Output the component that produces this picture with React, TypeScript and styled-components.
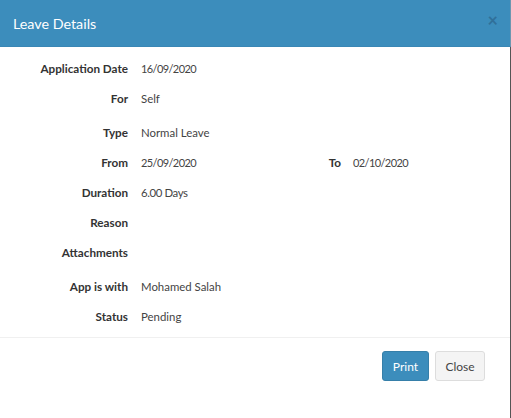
import React from "react";
import styled, { createGlobalStyle } from "styled-components";

const Global = createGlobalStyle`
  html, body { margin: 0; padding: 0; background: #fff; }
  body { font-family: "Lato", "Noto Sans", sans-serif; font-size: 11.7px; color: #333; }
`;

const Modal = styled.div`
  width: 511px;
  height: 418px;
  background: #fff;
  overflow: hidden;
`;

const Header = styled.header`
  height: 47px;
  box-sizing: border-box;
  background: #3c8dbc;
  border-bottom: 1px solid #3a87b5;
  border-right: 1px solid #6d97b0;
  color: #fff;
  display: flex;
  align-items: center;
  justify-content: space-between;
  padding: 0 12px 0 13px;
`;

const Title = styled.h4`
  margin: 0;
  font-size: 14.3px;
  font-weight: 400;
`;

const CloseX = styled.span`
  font-size: 18px;
  font-weight: 700;
  color: #30709a;
  line-height: 1;
  margin-top: -6px;
`;

const Content = styled.div`
  height: 371px;
  box-sizing: border-box;
  border-right: 1px solid #555;
`;

const Body = styled.div`
  padding: 6px 0 0;
  height: 291px;
  box-sizing: border-box;
  border-bottom: 1px solid #f0f0f0;
`;

const Row = styled.div<{ $top?: number }>`
  height: 30px;
  margin-top: ${(p) => p.$top ?? 0}px;
  display: flex;
  align-items: center;
`;

const Label = styled.span`
  width: 128px;
  text-align: right;
  font-weight: 700;
  color: #333;
  flex: none;
`;

const Value = styled.span<{ $date?: boolean; $narrow?: boolean }>`
  margin-left: 13px;
  width: 151px;
  color: #444;
  flex: none;
  font-size: ${(p) => (p.$date ? "11px" : "11.4px")};
  letter-spacing: ${(p) => (p.$date ? "-0.6px" : p.$narrow ? "-0.4px" : "normal")};
`;

const SecondLabel = styled.span`
  width: 49px;
  text-align: right;
  font-weight: 700;
  flex: none;
`;

const SecondValue = styled.span`
  margin-left: 12px;
  color: #444;
  font-size: 11px;
  letter-spacing: -0.6px;
`;

const Footer = styled.footer`
  display: flex;
  justify-content: flex-end;
  gap: 6px;
  padding: 13px 25px 0 0;
`;

const Button = styled.button<{ $primary?: boolean }>`
  height: 30px;
  box-sizing: border-box;
  padding: 0;
  width: ${(p) => (p.$primary ? 47 : 50)}px;
  border-radius: 3px;
  font: inherit;
  font-size: 12px;
  background: ${(p) => (p.$primary ? "#3c8dbc" : "#f4f4f4")};
  border: 1px solid ${(p) => (p.$primary ? "#367fa9" : "#ddd")};
  color: ${(p) => (p.$primary ? "#fff" : "#444")};
`;

export default function App() {
  return (
    <Modal>
      <Global />
      <Header>
        <Title>Leave Details</Title>
        <CloseX>×</CloseX>
      </Header>
      <Content>
        <Body>
          <Row>
            <Label>Application Date</Label>
            <Value $date>16/09/2020</Value>
          </Row>
          <Row>
            <Label>For</Label>
            <Value>Self</Value>
          </Row>
          <Row $top={4}>
            <Label>Type</Label>
            <Value>Normal Leave</Value>
          </Row>
          <Row>
            <Label>From</Label>
            <Value $date>25/09/2020</Value>
            <SecondLabel>To</SecondLabel>
            <SecondValue>02/10/2020</SecondValue>
          </Row>
          <Row>
            <Label>Duration</Label>
            <Value $narrow>6.00 Days</Value>
          </Row>
          <Row>
            <Label>Reason</Label>
          </Row>
          <Row>
            <Label>Attachments</Label>
          </Row>
          <Row $top={4}>
            <Label>App is with</Label>
            <Value>Mohamed Salah</Value>
          </Row>
          <Row>
            <Label>Status</Label>
            <Value>Pending</Value>
          </Row>
        </Body>
        <Footer>
          <Button $primary>Print</Button>
          <Button>Close</Button>
        </Footer>
      </Content>
    </Modal>
  );
}
